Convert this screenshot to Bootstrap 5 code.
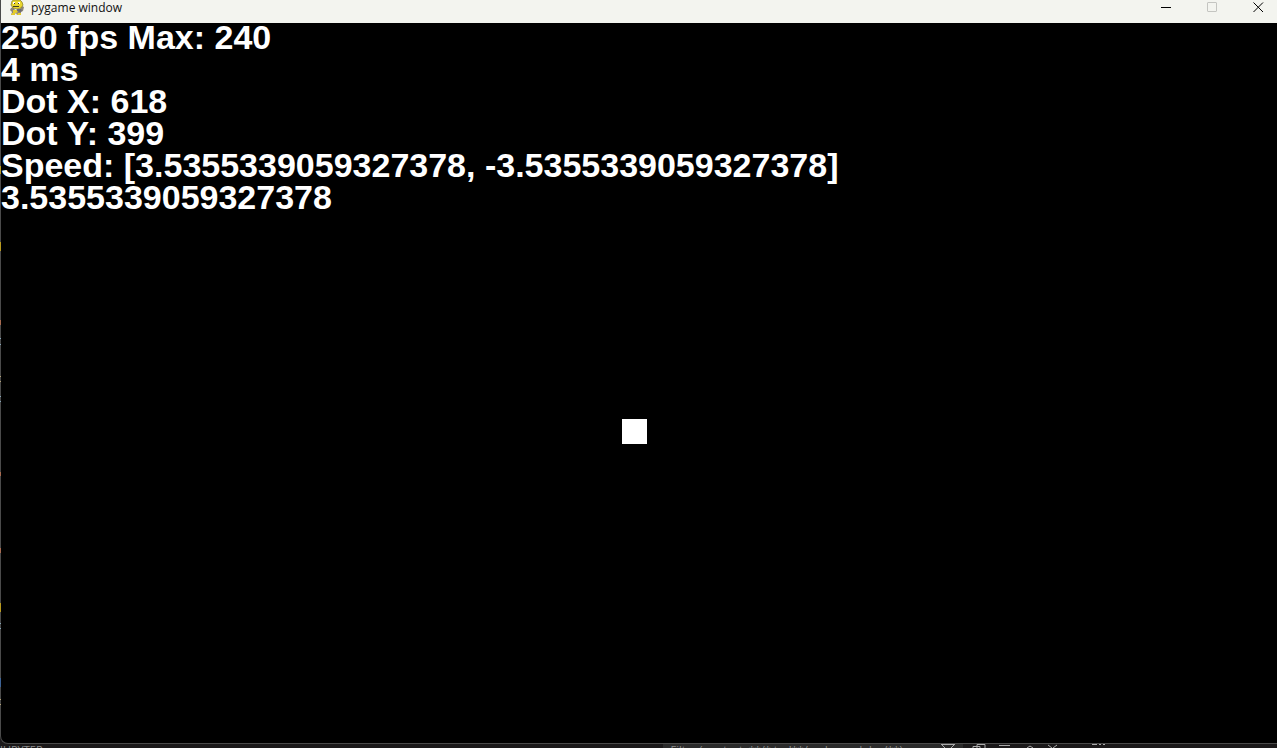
<!DOCTYPE html>
<html lang="en">
<head>
<meta charset="utf-8">
<meta name="viewport" content="width=device-width, initial-scale=1">
<title>pygame window</title>
<link href="https://cdn.jsdelivr.net/npm/bootstrap@5.3.0/dist/css/bootstrap.min.css" rel="stylesheet">
<style>
  body { background: #1b191a; }
  .game-window { border: solid #4a4a4a; border-width: 0 0 1px 1px; border-bottom-left-radius: 8px; background: #000; }
  .title-bar { height: 23px; background: #f3f4ef; color: #111; font: 12px/16px "Open Sans", sans-serif; }
  .title-bar button { width: 38px; height: 14px; color: #000; }
  .title-bar button:disabled { color: #c4c5c1; }
  .title-bar svg { display: block; }
  .window-name { padding-left: 6px; }
  .readout { color: #fff; font: bold 34px/28px "Liberation Sans", Arial, sans-serif; }
  .dot { width: 25px; height: 25px; left: 621px; top: 396px; }
  .editor-strip { height: 4px; color: #8b8b8b; font: 11px/12px "Open Sans", sans-serif; }
  .filter-box { width: 300px; background: #2b2b2b; }
  .edge-marks { left: 0; top: 0; width: 1px; height: 100%; }
</style>
</head>
<body class="vh-100 overflow-hidden d-flex flex-column">
<main class="game-window flex-grow-1 d-flex flex-column overflow-hidden">
  <header class="title-bar d-flex align-items-start flex-shrink-0">
    <svg class="ms-2" width="16" height="16" viewBox="0 0 16 16" aria-hidden="true">
      <path d="M2 8 4 7 6 10 11 9 13 6 15 7 14 11 12 12 12 15H8L7 13 5 15H2L3 12 1 10Z" fill="#8d8578"/>
      <path d="M3 1 5 0H11L13 2 14 5 12 8 8 9 4 8 2 5Z" fill="#e9d62e" stroke="#82791d" stroke-width=".7"/>
      <path d="M4 10H8L9 12 7 13H4ZM3 13H6V15H2ZM9 13H12V15H8Z" fill="#e3cb2c"/>
      <path d="M8 9H12L13 11 11 12 8 11Z" fill="#696873"/>
      <path d="M4 2H6V4H4ZM9 2H11V4H9Z" fill="#fff"/>
      <path d="M5 3H6V4H5ZM9 3H10V4H9ZM4 6H10V7H4Z" fill="#3e3b21"/>
    </svg>
    <span class="window-name me-auto">pygame window</span>
    <div class="d-flex gap-2">
      <button type="button" class="btn p-0 border-0 rounded-0 d-flex justify-content-center align-items-center" aria-label="Minimize">
        <svg width="11" height="11" viewBox="0 0 11 11"><path d="M0 5.5H10" stroke="currentColor"/></svg>
      </button>
      <button type="button" class="btn p-0 border-0 rounded-0 d-flex justify-content-center align-items-center opacity-100" aria-label="Maximize" disabled>
        <svg width="11" height="11" viewBox="0 0 11 11"><rect x=".5" y=".5" width="9" height="9" rx=".5" fill="none" stroke="currentColor"/></svg>
      </button>
      <button type="button" class="btn p-0 border-0 rounded-0 d-flex justify-content-center align-items-center" aria-label="Close">
        <svg width="11" height="11" viewBox="0 0 11 11"><path d="M.5.5l9.500 9.500M10 .5l-9.500 9.500" stroke="currentColor"/></svg>
      </button>
    </div>
  </header>
  <section class="position-relative flex-grow-1">
    <div class="readout text-nowrap d-flex flex-column gap-1">
      <div>250 fps Max: 240</div>
      <div>4 ms</div>
      <div>Dot X: 618</div>
      <div>Dot Y: 399</div>
      <div>Speed: [3.5355339059327378, -3.5355339059327378]</div>
      <div>3.5355339059327378</div>
    </div>
    <div class="dot bg-white position-absolute"></div>
  </section>
</main>
<!-- coloured slivers of the editor behind the window -->
<svg class="edge-marks position-absolute" aria-hidden="true">
  <path d="M.5 166v8M.5 242v9M.5 603v9" stroke="#b99a20"/>
  <path d="M.5 320v5M.5 472v4M.5 548v5" stroke="#a86a50"/>
  <path d="M.5 338v1M.5 344v1M.5 396v1M.5 401v1M.5 623v1M.5 628v1" stroke="#86a5b8"/>
  <path d="M.5 376v1M.5 381v1M.5 699v1M.5 704v1" stroke="#b3a278"/>
  <path d="M.5 678v9" stroke="#3d6396"/>
</svg>
<footer class="editor-strip d-flex flex-shrink-0 overflow-hidden">
  <span class="col-6">JUPYTER</span>
  <div class="d-flex flex-grow-1">
    <div class="filter-box ms-4 ps-2 d-flex justify-content-between text-nowrap">
      <span>Filter (e.g. text, **/*.ts, !**/node_modules/**)</span>
      <svg class="me-2" width="14" height="4" viewBox="0 0 14 4" aria-hidden="true"><path d="M0 .5H14M1 1l3 3M13 1l-3 3" fill="none" stroke="#aaa"/></svg>
    </div>
    <svg class="ms-2" width="144" height="4" viewBox="0 0 144 4" aria-hidden="true"><path d="M6 4V.5H14V4M2 4V2.500H9V4M28 1.500H39M56 4l3-2 3 2M77 1l4 3M86 1l-4 3M121 .5H126M128 .5H130M132 .5H134" fill="none" stroke="#aaa"/></svg>
  </div>
</footer>
<script src="https://cdn.jsdelivr.net/npm/bootstrap@5.3.0/dist/js/bootstrap.bundle.min.js"></script>
</body>
</html>
